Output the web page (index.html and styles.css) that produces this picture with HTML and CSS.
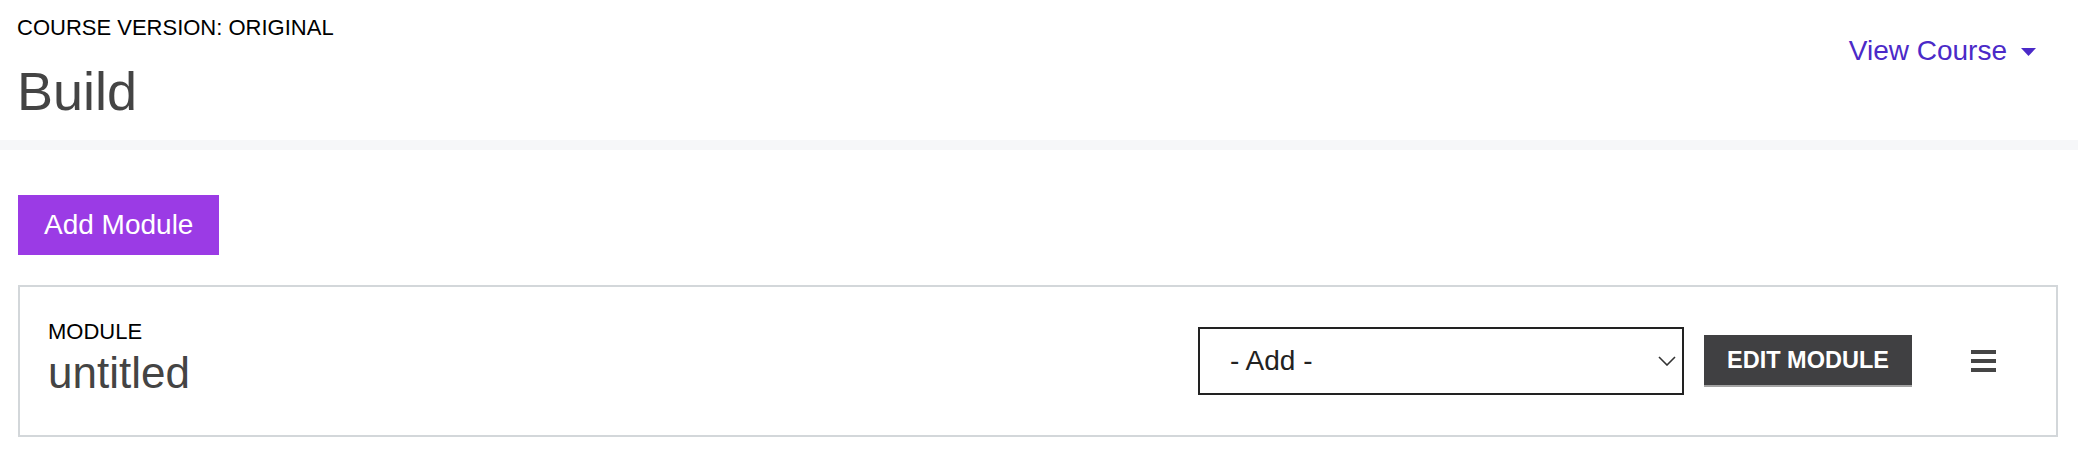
FILE: index.html
```html
<!DOCTYPE html>
<html lang="en">
<head>
<meta charset="utf-8">
<title>Build</title>
<link rel="stylesheet" href="styles.css">
</head>
<body>
<header class="page-header">
  <div class="title-block">
    <div class="version">COURSE VERSION: ORIGINAL</div>
    <h1 class="page-title">Build</h1>
  </div>
  <a class="view-course" href="#">View Course <svg class="caret" width="15" height="8" viewBox="0 0 15 8"><polygon points="0,0 15,0 7.5,8" fill="currentColor"/></svg></a>
</header>
<main class="content">
  <button class="btn-add" type="button">Add Module</button>
  <section class="module-card">
    <div class="module-info">
      <div class="module-label">MODULE</div>
      <div class="module-name">untitled</div>
    </div>
    <div class="module-actions">
      <div class="select-box">
        <span class="select-text">- Add -</span>
        <svg class="chevron" width="18" height="10" viewBox="0 0 18 10"><polyline points="1,1 9,9 17,1" fill="none" stroke="#333" stroke-width="1.6"/></svg>
      </div>
      <button class="btn-edit" type="button">EDIT MODULE</button>
      <div class="hamburger"><span></span><span></span><span></span></div>
    </div>
  </section>
</main>
</body>
</html>
```

FILE: styles.css
```css
* { box-sizing: border-box; }

body {
  margin: 0;
  font-family: "Liberation Sans", Arial, sans-serif;
  background: #fff;
  color: #000;
}

.page-header {
  display: flex;
  justify-content: space-between;
  align-items: flex-start;
  padding: 15px 42px 19px 17px;
  border-bottom: 10px solid #f6f7f9;
}

.version {
  font-size: 22px;
  line-height: 26px;
  color: #000;
}

.page-title {
  margin: 20px 0 0;
  font-size: 54px;
  line-height: 60px;
  font-weight: normal;
  color: #444;
}

.view-course {
  margin-top: 20px;
  display: flex;
  align-items: center;
  gap: 14px;
  font-size: 28px;
  line-height: 32px;
  color: #4b2ac8;
  text-decoration: none;
}

.caret { display: block; margin-top: 2px; }

.content {
  padding: 45px 20px 0 18px;
}

.btn-add {
  display: block;
  height: 60px;
  padding: 0 26px;
  border: none;
  background: #9b3be5;
  color: #fff;
  font-family: inherit;
  font-size: 28px;
  line-height: 32px;
}

.module-card {
  margin-top: 30px;
  height: 152px;
  border: 2px solid #d3d7da;
  display: flex;
  align-items: center;
  justify-content: space-between;
  padding: 0 60px 0 28px;
}

.module-info {
  align-self: flex-start;
  padding-top: 32px;
}

.module-label {
  font-size: 22px;
  line-height: 26px;
  color: #000;
}

.module-name {
  margin-top: 3px;
  font-size: 44px;
  line-height: 50px;
  color: #444;
}

.module-actions {
  display: flex;
  align-items: center;
}

.select-box {
  width: 486px;
  height: 68px;
  border: 2px solid #222;
  display: flex;
  align-items: center;
  justify-content: space-between;
  padding: 0 6px 0 30px;
  font-size: 28px;
  color: #222;
}

.chevron { display: block; }

.btn-edit {
  margin-left: 20px;
  width: 208px;
  height: 52px;
  border: none;
  border-bottom: 2px solid #a3a3a3;
  background: #404042;
  color: #fff;
  font-family: inherit;
  font-weight: bold;
  font-size: 23.5px;
  line-height: 26px;
  padding: 0;
}

.hamburger {
  margin-left: 59px;
  width: 25px;
  display: flex;
  flex-direction: column;
  gap: 5px;
}

.hamburger span {
  display: block;
  height: 4px;
  background: #454545;
}
```
